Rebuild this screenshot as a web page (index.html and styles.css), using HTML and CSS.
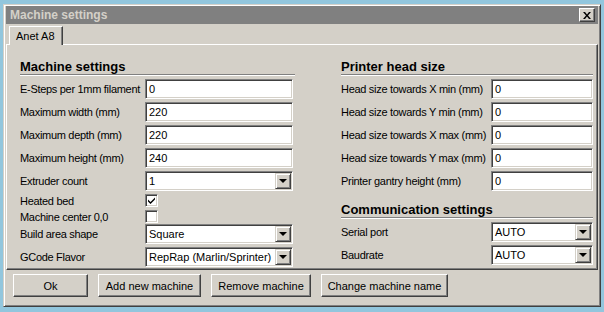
FILE: index.html
```html
<!DOCTYPE html>
<html lang="en">
<head>
    <meta charset="UTF-8" />
    <meta name="viewport" content="width=device-width, initial-scale=1.0" />
    <link rel="stylesheet" href="styles.css">
    <title>Machine settings</title>
</head>
<body>
    <div class="window">
        <div class="titlebar">
            <span class="title">Machine settings</span>
            <span class="close">
                <svg width="8" height="7" viewBox="0 0 8 7"><path d="M0 0h2l2 2.5L6 0h2L5 3.5 8 7H6L4 4.5 2 7H0l3-3.5z" fill="#000"/></svg>
            </span>
        </div>

        <div class="tabs">
            <div class="tab">Anet A8</div>
        </div>

        <div class="panel">
            <div class="col col-left">
                <h2>Machine settings</h2>
                <div class="row"><label>E-Steps per 1mm filament</label><div class="field">0</div></div>
                <div class="row"><label>Maximum width (mm)</label><div class="field">220</div></div>
                <div class="row"><label>Maximum depth (mm)</label><div class="field">220</div></div>
                <div class="row"><label>Maximum height (mm)</label><div class="field">240</div></div>
                <div class="row"><label>Extruder count</label><div class="field select">1<span class="arrow"></span></div></div>
                <div class="row check-row"><label>Heated bed</label><div class="check">
                    <svg width="9" height="9" viewBox="0 0 9 9"><path d="M1 3.5l2.5 2.5L8 1.5v2L3.5 8 1 5.5z" fill="#000"/></svg>
                </div></div>
                <div class="row check-row last"><label>Machine center 0,0</label><div class="check"></div></div>
                <div class="row"><label>Build area shape</label><div class="field select">Square<span class="arrow"></span></div></div>
                <div class="row"><label>GCode Flavor</label><div class="field select">RepRap (Marlin/Sprinter)<span class="arrow"></span></div></div>
            </div>

            <div class="col col-right">
                <h2>Printer head size</h2>
                <div class="row"><label>Head size towards X min (mm)</label><div class="field">0</div></div>
                <div class="row"><label>Head size towards Y min (mm)</label><div class="field">0</div></div>
                <div class="row"><label>Head size towards X max (mm)</label><div class="field">0</div></div>
                <div class="row"><label>Head size towards Y max (mm)</label><div class="field">0</div></div>
                <div class="row"><label>Printer gantry height (mm)</label><div class="field">0</div></div>
                <h2 class="sub">Communication settings</h2>
                <div class="row"><label>Serial port</label><div class="field select">AUTO<span class="arrow"></span></div></div>
                <div class="row"><label>Baudrate</label><div class="field select">AUTO<span class="arrow"></span></div></div>
            </div>
        </div>

        <div class="buttons">
            <button class="btn btn-ok">Ok</button>
            <button class="btn">Add new machine</button>
            <button class="btn btn-remove">Remove machine</button>
            <button class="btn btn-wide">Change machine name</button>
        </div>
    </div>
</body>
</html>
```

FILE: styles.css
```css
* {
    box-sizing: border-box;
}

body {
    margin: 0;
    width: 604px;
    height: 312px;
    overflow: hidden;
    background-color: #92c6dd;
    font-family: "Liberation Sans", Arial, sans-serif;
    font-size: 11px;
    color: #000;
}

.window {
    margin: 4px 0 0 3px;
    width: 598px;
    height: 303px;
    background-color: #d4d0c8;
    border: 1px solid;
    border-color: #d4d0c8 #404040 #404040 #d4d0c8;
    box-shadow: inset 1px 1px 0 #fff, inset -1px -1px 0 #808080;
    padding: 1px 2px 2px 2px;
}

.titlebar {
    height: 18px;
    background-color: #808080;
    display: flex;
    align-items: center;
    justify-content: space-between;
    padding: 0 3px 0 4px;
}

.title {
    color: #d4d0c8;
    font-weight: bold;
    font-size: 12px;
}

.close {
    width: 16px;
    height: 14px;
    background-color: #d4d0c8;
    border: 1px solid;
    border-color: #fff #404040 #404040 #fff;
    box-shadow: inset -1px -1px 0 #808080;
    display: flex;
    align-items: center;
    justify-content: center;
}

.tabs {
    display: flex;
    height: 20px;
    padding: 2px 0 0 3px;
}

.tab {
    height: 19px;
    padding: 3px 7px 0 6px;
    border: 1px solid;
    border-bottom: none;
    border-color: #fff #404040 #fff #fff;
    box-shadow: inset -1px 0 0 #808080;
    font-size: 11px;
    position: relative;
    z-index: 1;
    background-color: #d4d0c8;
}

.panel {
    height: 226px;
    border: 1px solid;
    border-color: #fff #404040 #404040 #fff;
    box-shadow: inset -1px -1px 0 #808080;
    display: flex;
    gap: 46px;
    padding: 11px 0 0 13px;
}

.col-left {
    width: 275px;
}

.col-right {
    width: 252px;
}

h2 {
    margin: 0 0 4px 0;
    font-size: 13px;
    font-weight: bold;
    height: 19px;
    padding-top: 3px;
    line-height: 15px;
    border-bottom: 1px solid #808080;
    box-shadow: 0 1px 0 #fff;
}

h2.sub {
    margin-top: 8px;
    margin-bottom: 4px;
}

.row {
    display: flex;
    align-items: center;
    height: 20px;
    margin-bottom: 3px;
}

.row label {
    flex: none;
    white-space: nowrap;
    letter-spacing: -0.3px;
}

.col-left .row label {
    width: 125px;
}

.col-right .row label {
    width: 150px;
}

.field {
    height: 20px;
    background-color: #fff;
    border: 1px solid;
    border-color: #808080 #fff #fff #808080;
    box-shadow: inset 1px 1px 0 #404040, inset -1px -1px 0 #d4d0c8;
    padding: 0 0 0 3px;
    line-height: 18px;
    position: relative;
    white-space: nowrap;
    overflow: hidden;
}

.col-left .field {
    width: 148px;
}

.col-right .field {
    width: 102px;
}

.arrow {
    position: absolute;
    right: 1px;
    top: 1px;
    width: 16px;
    height: 16px;
    background-color: #d4d0c8;
    border: 1px solid;
    border-color: #d4d0c8 #404040 #404040 #d4d0c8;
    box-shadow: inset 1px 1px 0 #fff, inset -1px -1px 0 #808080;
}

.arrow::after {
    content: "";
    position: absolute;
    left: 3px;
    top: 5px;
    border-left: 4px solid transparent;
    border-right: 4px solid transparent;
    border-top: 4px solid #000;
}

.check-row {
    height: 13px;
    margin-bottom: 3px;
}

.check-row.last {
    margin-bottom: 1px;
}

.check {
    width: 13px;
    height: 13px;
    background-color: #fff;
    border: 1px solid;
    border-color: #808080 #fff #fff #808080;
    box-shadow: inset 1px 1px 0 #404040, inset -1px -1px 0 #d4d0c8;
    display: flex;
    align-items: center;
    justify-content: center;
}

.buttons {
    display: flex;
    gap: 10px;
    padding: 4px 0 0 7px;
}

.btn {
    height: 23px;
    width: 103px;
    font-family: "Liberation Sans", Arial, sans-serif;
    font-size: 11px;
    background-color: #d4d0c8;
    border: 1px solid;
    border-color: #fff #404040 #404040 #fff;
    box-shadow: inset -1px -1px 0 #808080;
    padding: 0;
    color: #000;
}

.btn-ok {
    width: 75px;
}

.btn-remove {
    width: 100px;
}

.btn-wide {
    width: 127px;
}
```
